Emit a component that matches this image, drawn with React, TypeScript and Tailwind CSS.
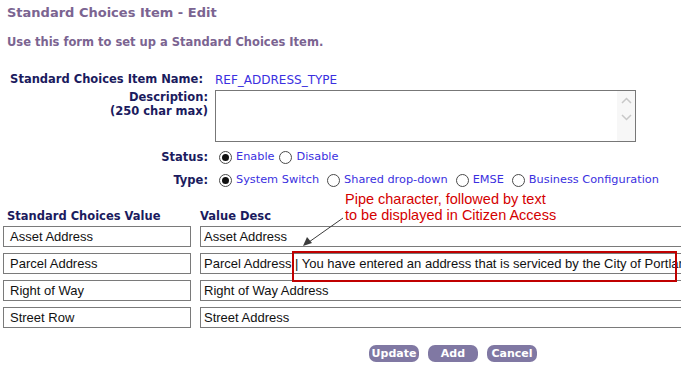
import React from "react";

function Radio({ checked }: { checked?: boolean }) {
  return (
    <span className="inline-flex items-center justify-center w-[13px] h-[13px] rounded-full border border-[#4a4a4a] bg-white shrink-0">
      {checked && <span className="w-[7px] h-[7px] rounded-full bg-[#111]" />}
    </span>
  );
}

function Option({ label, checked }: { label: string; checked?: boolean }) {
  return (
    <span className="inline-flex items-center gap-[4px]">
      <Radio checked={checked} />
      <span>{label}</span>
    </span>
  );
}

function Field({ value, wide }: { value: string; wide?: boolean }) {
  return (
    <div
      className={`h-[21px] shrink-0 border border-[#7a7a7a] bg-white flex items-center text-[13px] text-[#111] whitespace-nowrap overflow-hidden font-['Liberation_Sans',Arial,sans-serif] ${
        wide ? "w-[520px] pl-[3px]" : "w-[188px] pl-[6px]"
      }`}
    >
      {value}
    </div>
  );
}

export default function App() {
  const rows = [
    { value: "Asset Address", desc: "Asset Address" },
    {
      value: "Parcel Address",
      desc: "Parcel Address | You have entered an address that is serviced by the City of Portland",
    },
    { value: "Right of Way", desc: "Right of Way Address" },
    { value: "Street Row", desc: "Street Address" },
  ];

  return (
    <div className="relative w-[681px] h-[377px] overflow-hidden bg-white font-['DejaVu_Sans',Verdana,sans-serif]">
      {/* Heading */}
      <div className="pl-[7px] pt-[4px]">
        <h1 className="text-[13px] leading-[18px] font-bold text-[#7b6491]">Standard Choices Item - Edit</h1>
        <p className="mt-[12px] text-[11.5px] leading-[16px] font-bold text-[#7b6491]">
          Use this form to set up a Standard Choices Item.
        </p>
      </div>

      {/* Form */}
      <div className="mt-[22px] grid grid-cols-[208px_1fr] gap-x-[7px] text-[11.5px] leading-[14px]">
        <div className="text-right font-bold text-[#1b1b5e] pr-[5px]">Standard Choices Item Name:</div>
        <div className="text-[12px] text-[#3a2fe0] pt-[1px]">REF_ADDRESS_TYPE</div>

        <div className="mt-[3px] text-right font-bold text-[#1b1b5e]">
          Description:
          <br />
          (250 char max)
        </div>
        <div className="mt-[3px] w-[421px] h-[52px] border border-[#777] bg-white flex justify-end">
          <div className="w-[18px] bg-[#f7f7f7] flex flex-col items-center pt-[6px] gap-[10px]">
            <svg width="11" height="7" viewBox="0 0 11 7">
              <path d="M1 6 L5.5 1.5 L10 6" fill="none" stroke="#c8c8c8" strokeWidth="1.5" />
            </svg>
            <svg width="11" height="7" viewBox="0 0 11 7">
              <path d="M1 1 L5.5 5.5 L10 1" fill="none" stroke="#c8c8c8" strokeWidth="1.5" />
            </svg>
          </div>
        </div>

        <div className="mt-[8px] text-right font-bold text-[#1b1b5e]">Status:</div>
        <div className="mt-[8px] pl-[4px] flex items-center gap-[5px] text-[11.3px] text-[#3a2fe0]">
          <Option label="Enable" checked />
          <Option label="Disable" />
        </div>

        <div className="mt-[9px] text-right font-bold text-[#1b1b5e]">Type:</div>
        <div className="mt-[9px] pl-[4px] flex items-center gap-[8px] text-[11.3px] text-[#3a2fe0]">
          <Option label="System Switch" checked />
          <Option label="Shared drop-down" />
          <Option label="EMSE" />
          <Option label="Business Configuration" />
        </div>
      </div>

      {/* Values table */}
      <div className="mt-[22px] pl-[7px] flex text-[11.5px] leading-[14px] font-bold text-[#1b1b5e]">
        <div className="w-[193px]">Standard Choices Value</div>
        <div>Value Desc</div>
      </div>
      <div className="mt-[3px] pl-[3px] flex flex-col gap-[6px]">
        {rows.map((r, i) => (
          <div key={i} className="flex gap-[9px]">
            <Field value={r.value} />
            <Field value={r.desc} wide />
          </div>
        ))}
      </div>

      {/* Buttons */}
      <div className="mt-[17px] flex gap-[9px] pl-[369px]">
        {["Update", "Add", "Cancel"].map((b) => (
          <button
            key={b}
            className="w-[50px] h-[17px] rounded-[7px] bg-[#8078a3] text-white text-[11px] font-bold leading-[17px]"
          >
            {b}
          </button>
        ))}
      </div>

      {/* Annotation */}
      <div className="absolute left-[345px] top-[191px] text-[14.5px] leading-[16px] text-[#d40000] font-['Liberation_Sans',Arial,sans-serif]">
        Pipe character, followed by text
        <br />
        to be displayed in Citizen Access
      </div>
      <svg className="absolute left-0 top-0 pointer-events-none" width="681" height="377">
        <line x1="343" y1="218" x2="309" y2="242" stroke="#3c3c3c" strokeWidth="1" />
        <path d="M303 246 L307 237 L312 243 Z" fill="#3c3c3c" />
      </svg>
      <div className="absolute left-[292px] top-[251px] w-[385px] h-[31px] border-2 border-[#c00000]" />
    </div>
  );
}
